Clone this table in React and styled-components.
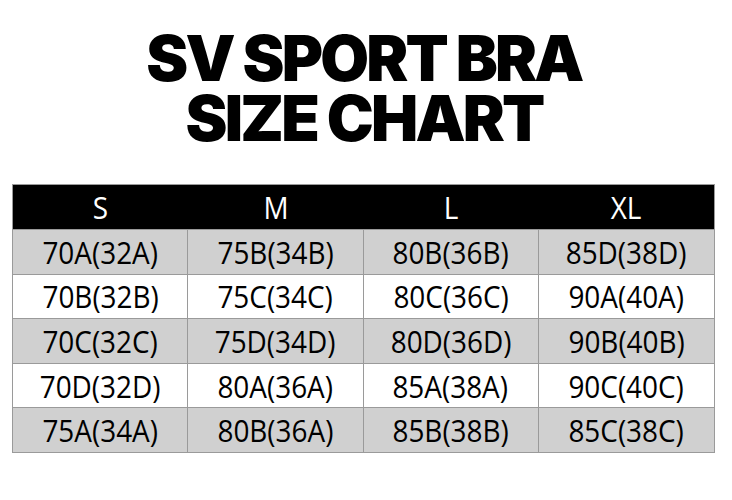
import React from "react";
import styled, { createGlobalStyle } from "styled-components";

const GlobalStyle = createGlobalStyle`
  body {
    margin: 0;
    background: #fff;
  }
`;

const Page = styled.div`
  width: 732px;
  height: 500px;
  padding-top: 28px;
  box-sizing: border-box;
  display: flex;
  flex-direction: column;
`;

const Title = styled.h1`
  margin: 0 0 0 -4px;
  font-family: Inter, "Liberation Sans", sans-serif;
  font-weight: 900;
  font-size: 63px;
  letter-spacing: -2.8px;
  text-align: center;
  color: #000;
`;

const TitleLine = styled.div`
  height: 60px;
  line-height: 60px;
`;

const Table = styled.div`
  margin: 36px 0 0 12px;
  width: 703px;
  display: grid;
  grid-template-columns: repeat(4, 1fr);
  grid-template-rows: 44px repeat(5, 44.6px);
  border: 1px solid #9a9a9a;
  box-sizing: border-box;
`;

const Cell = styled.div`
  display: flex;
  align-items: center;
  justify-content: center;
  background: ${(p) => (p.$head ? "#000" : p.$shaded ? "#d0d0d0" : "#fff")};
  color: ${(p) => (p.$head ? "#fff" : "#000")};
  border-right: ${(p) => (p.$last || p.$head ? "none" : "1px solid #9a9a9a")};
  border-top: ${(p) => (p.$head ? "none" : "1px solid #9a9a9a")};
  font-family: "Open Sans", "Noto Sans", sans-serif;
  font-size: 31px;
  overflow: hidden;
`;

const Label = styled.span`
  display: inline-block;
  transform: scaleX(0.9);
  white-space: nowrap;
`;

const sizes = ["S", "M", "L", "XL"];

const rows = [
  ["70A(32A)", "75B(34B)", "80B(36B)", "85D(38D)"],
  ["70B(32B)", "75C(34C)", "80C(36C)", "90A(40A)"],
  ["70C(32C)", "75D(34D)", "80D(36D)", "90B(40B)"],
  ["70D(32D)", "80A(36A)", "85A(38A)", "90C(40C)"],
  ["75A(34A)", "80B(36A)", "85B(38B)", "85C(38C)"],
];

export default function App() {
  return (
    <>
      <GlobalStyle />
      <Page>
        <Title>
          <TitleLine>SV SPORT BRA</TitleLine>
          <TitleLine>SIZE CHART</TitleLine>
        </Title>
        <Table>
          {sizes.map((s) => (
            <Cell key={s} $head>
              <Label>{s}</Label>
            </Cell>
          ))}
          {rows.map((row, i) =>
            row.map((v, j) => (
              <Cell key={i + "-" + j} $shaded={i % 2 === 0} $last={j === 3}>
                <Label>{v}</Label>
              </Cell>
            ))
          )}
        </Table>
      </Page>
    </>
  );
}
